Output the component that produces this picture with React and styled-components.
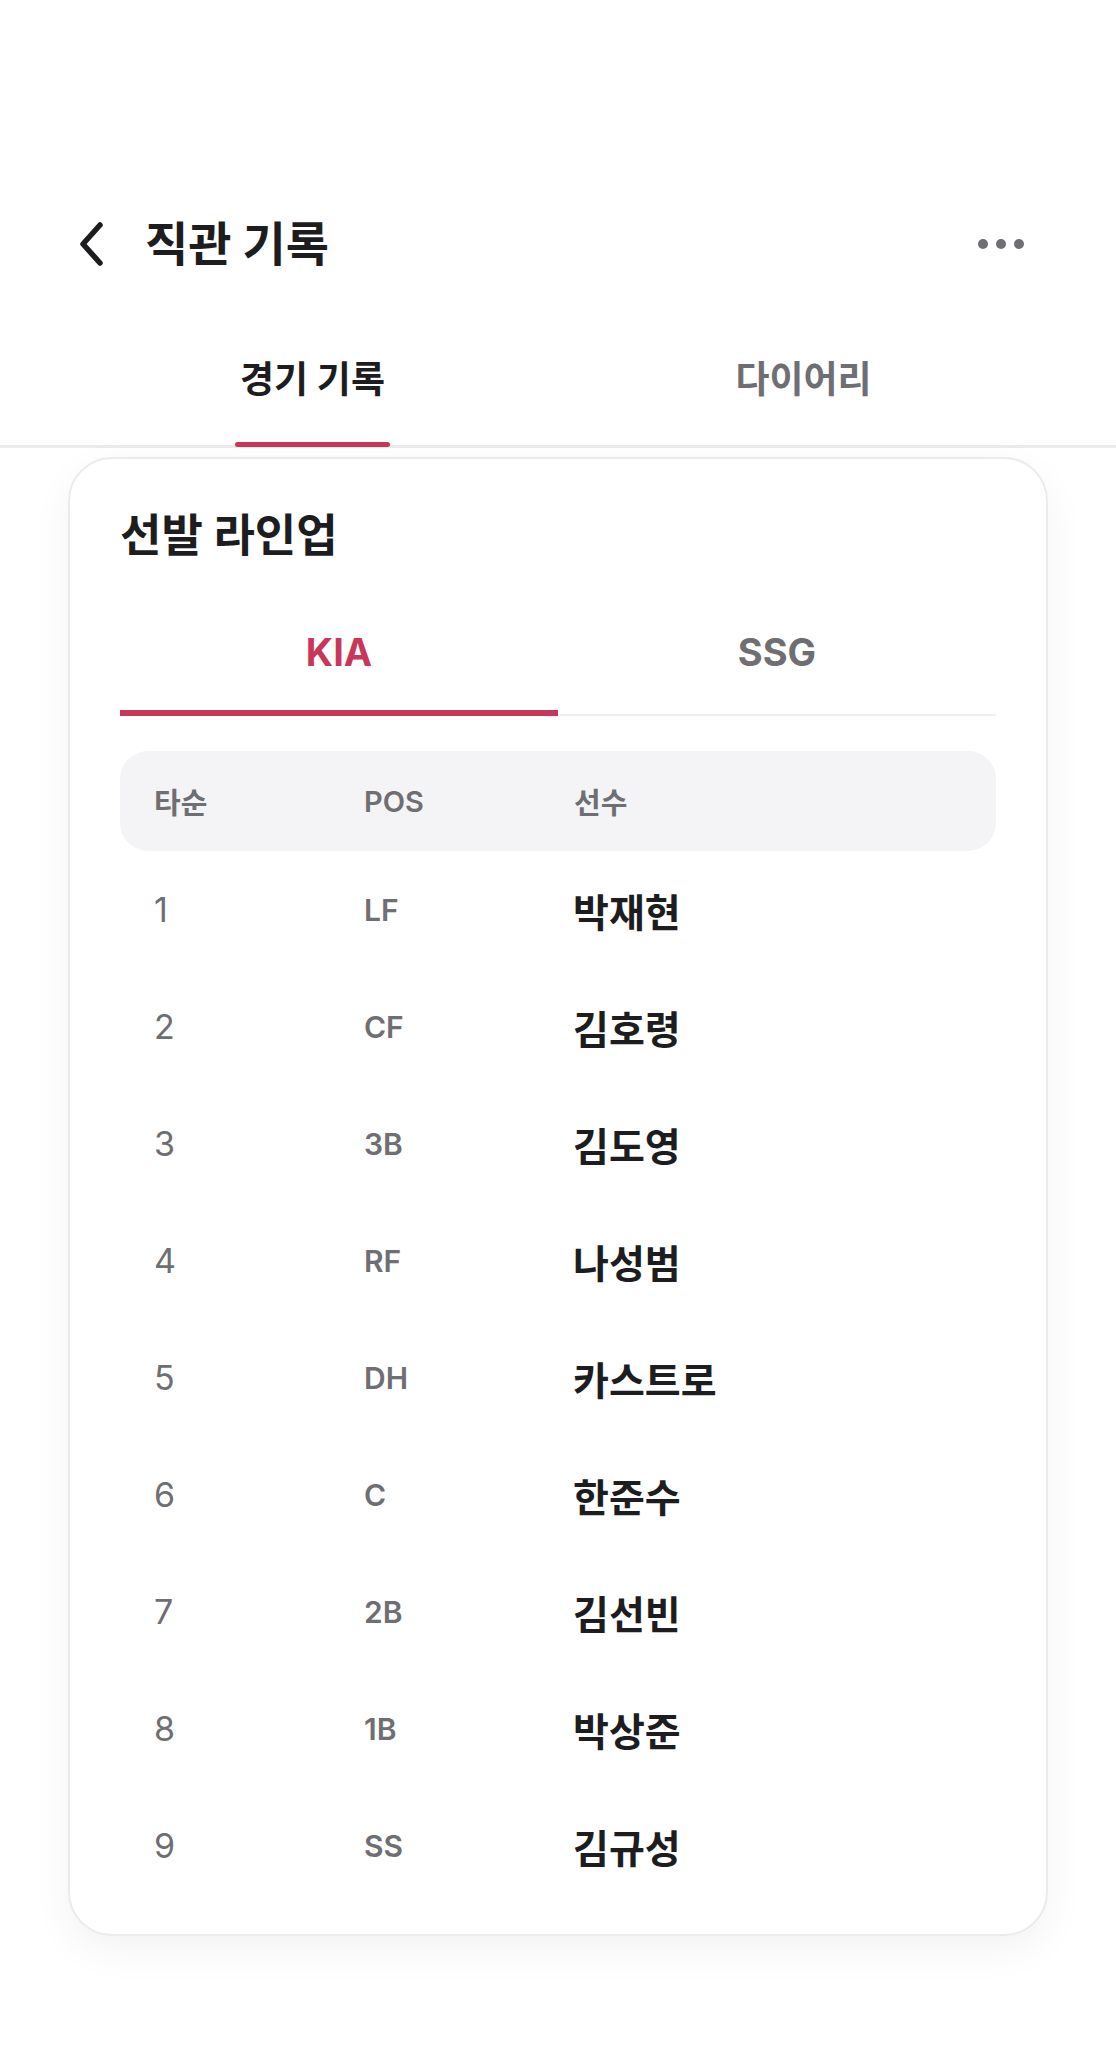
import React, { useState } from "react";
import styled, { createGlobalStyle } from "styled-components";

const lineup = {
  KIA: [
    { order: 1, pos: "LF", name: "박재현" },
    { order: 2, pos: "CF", name: "김호령" },
    { order: 3, pos: "3B", name: "김도영" },
    { order: 4, pos: "RF", name: "나성범" },
    { order: 5, pos: "DH", name: "카스트로" },
    { order: 6, pos: "C", name: "한준수" },
    { order: 7, pos: "2B", name: "김선빈" },
    { order: 8, pos: "1B", name: "박상준" },
    { order: 9, pos: "SS", name: "김규성" },
  ],
  SSG: [],
};

const App = () => {
  const [pageTab, setPageTab] = useState("game");
  const [team, setTeam] = useState("KIA");

  return (
    <Page>
      <GlobalStyle />
      <StatusSpace />
      <NavBar>
        <BackButton aria-label="뒤로">
          <svg width="28" height="46" viewBox="0 0 28 46">
            <path
              d="M23 4 L6 23 L23 42"
              fill="none"
              stroke="#1d1d1f"
              strokeWidth="5.5"
              strokeLinecap="round"
              strokeLinejoin="round"
            />
          </svg>
        </BackButton>
        <NavTitle>직관 기록</NavTitle>
        <MoreButton aria-label="더보기">
          <svg width="48" height="12" viewBox="0 0 48 12">
            <circle cx="5" cy="6" r="5" fill="#6e6e73" />
            <circle cx="23" cy="6" r="5" fill="#6e6e73" />
            <circle cx="41" cy="6" r="5" fill="#6e6e73" />
          </svg>
        </MoreButton>
      </NavBar>

      <PageTabs>
        <PageTab onClick={() => setPageTab("game")}>
          <PageTabLabel Active={pageTab === "game"}>경기 기록</PageTabLabel>
          <PageIndicator Active={pageTab === "game"} />
        </PageTab>
        <PageTab onClick={() => setPageTab("diary")}>
          <PageTabLabel Active={pageTab === "diary"}>다이어리</PageTabLabel>
          <PageIndicator Active={pageTab === "diary"} />
        </PageTab>
      </PageTabs>

      <Card>
        <CardTitle>선발 라인업</CardTitle>
        <TeamTabs>
          {["KIA", "SSG"].map((t) => (
            <TeamTab key={t} Active={team === t} onClick={() => setTeam(t)}>
              {t}
            </TeamTab>
          ))}
        </TeamTabs>

        <TableHead>
          <HeadCell>타순</HeadCell>
          <HeadCell>POS</HeadCell>
          <HeadCell>선수</HeadCell>
        </TableHead>

        {lineup[team].map((p) => (
          <Row key={p.order}>
            <OrderCell>{p.order}</OrderCell>
            <PosCell>{p.pos}</PosCell>
            <NameCell>{p.name}</NameCell>
          </Row>
        ))}
      </Card>
    </Page>
  );
};

const GlobalStyle = createGlobalStyle`
  body {
    margin: 0;
    background: #ffffff;
    font-family: Inter, "Noto Sans CJK KR", "Noto Sans", sans-serif;
    color: #1d1d1f;
  }
  button {
    font-family: inherit;
  }
`;

const Page = styled.div`
  width: 100%;
  min-height: 2048px;
  background: #ffffff;
  padding-bottom: 60px;
`;

const StatusSpace = styled.div`
  height: 188px;
`;

const NavBar = styled.div`
  height: 112px;
  display: flex;
  align-items: center;
  padding: 0 90px 0 77px;
`;

const BackButton = styled.button`
  display: flex;
  align-items: center;
  border: none;
  background: none;
  padding: 0;
  cursor: pointer;
`;

const NavTitle = styled.h1`
  flex: 1;
  margin: 0 0 0 40px;
  font-size: 47px;
  line-height: 60px;
  font-weight: 700;
  color: #1d1d1f;
`;

const MoreButton = styled.button`
  display: flex;
  align-items: center;
  border: none;
  background: none;
  padding: 0;
  cursor: pointer;
`;

const PageTabs = styled.div`
  display: flex;
  padding: 0 67px;
  border-bottom: 3px solid #ebebed;
`;

const PageTab = styled.div`
  flex: 1;
  display: flex;
  flex-direction: column;
  align-items: center;
  padding-top: 56px;
  cursor: pointer;
`;

const PageTabLabel = styled.span`
  font-size: 37px;
  line-height: 48px;
  font-weight: ${(props) => (props.Active ? 700 : 600)};
  color: ${(props) => (props.Active ? "#1d1d1f" : "#6e6e73")};
`;

const PageIndicator = styled.div`
  width: 155px;
  height: 5px;
  margin-top: 38px;
  margin-bottom: -2px;
  border-radius: 3px;
  background: ${(props) => (props.Active ? "#c8365a" : "transparent")};
`;

const Card = styled.section`
  margin: 9px 68px 0;
  padding: 48px 50px 30px;
  background: #ffffff;
  border: 2px solid #ebebed;
  border-radius: 44px;
  box-shadow: 0 14px 40px rgba(0, 0, 0, 0.05);
`;

const CardTitle = styled.h2`
  margin: 0;
  font-size: 45px;
  line-height: 58px;
  font-weight: 700;
  color: #1d1d1f;
`;

const TeamTabs = styled.div`
  display: flex;
  margin-top: 38px;
  border-bottom: 2px solid #f0f0f2;
`;

const TeamTab = styled.button`
  flex: 1;
  border: none;
  background: none;
  padding: 26px 0 35px;
  margin-bottom: -2px;
  font-size: 38px;
  line-height: 46px;
  font-weight: 700;
  color: ${(props) => (props.Active ? "#c8365a" : "#6e6e73")};
  border-bottom: 6px solid
    ${(props) => (props.Active ? "#c8365a" : "transparent")};
  cursor: pointer;
`;

const TableHead = styled.div`
  display: grid;
  grid-template-columns: 210px 210px 1fr;
  align-items: center;
  height: 100px;
  margin-top: 35px;
  padding-left: 34px;
  background: #f4f4f6;
  border-radius: 28px;
`;

const HeadCell = styled.div`
  font-size: 29px;
  font-weight: 600;
  color: #6e6e73;
`;

const Row = styled.div`
  display: grid;
  grid-template-columns: 210px 209px 1fr;
  align-items: center;
  height: 117px;
  padding-left: 34px;
`;

const OrderCell = styled.div`
  font-size: 34px;
  font-weight: 400;
  color: #6e6e73;
`;

const PosCell = styled.div`
  font-size: 30px;
  font-weight: 600;
  color: #6e6e73;
`;

const NameCell = styled.div`
  font-size: 39px;
  font-weight: 700;
  color: #1d1d1f;
`;

export default App;
